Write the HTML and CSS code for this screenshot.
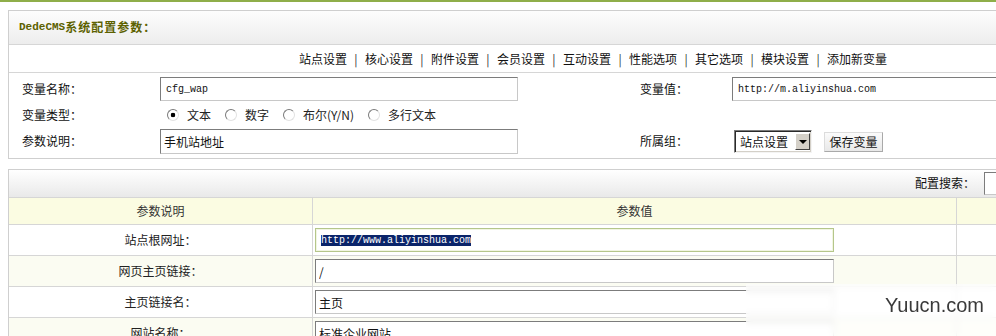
FILE: index.html
```html
<!DOCTYPE html>
<html lang="zh-CN">
<head>
<meta charset="utf-8">
<title>DedeCMS系统配置参数</title>
<link rel="stylesheet" href="styles.css">
</head>
<body>
<div class="topline"></div>
<div class="page">
  <div class="panel">
    <div class="title"><span class="latin">DedeCMS</span>系统配置参数：</div>
    <div class="nav">
      <a>站点设置</a><span class="sep">|</span><a>核心设置</a><span class="sep">|</span><a>附件设置</a><span class="sep">|</span><a>会员设置</a><span class="sep">|</span><a>互动设置</a><span class="sep">|</span><a>性能选项</a><span class="sep">|</span><a>其它选项</a><span class="sep">|</span><a>模块设置</a><span class="sep">|</span><a>添加新变量</a>
    </div>
    <div class="form">
      <div class="lbl">变量名称：</div>
      <div class="fld"><input class="txt mono w358" value="cfg_wap"></div>
      <div class="lbl">变量值：</div>
      <div class="fld"><input class="txt mono w358" value="http://m.aliyinshua.com"></div>

      <div class="lbl">变量类型：</div>
      <div class="fld radios">
        <label class="opt"><input type="radio" name="t" checked>文本</label>
        <label class="opt"><input type="radio" name="t">数字</label>
        <label class="opt"><input type="radio" name="t">布尔(Y/N)</label>
        <label class="opt"><input type="radio" name="t">多行文本</label>
      </div>
      <div></div>
      <div></div>

      <div class="lbl">参数说明：</div>
      <div class="fld"><input class="txt w358 tall" value="手机站地址"></div>
      <div class="lbl">所属组：</div>
      <div class="fld group">
        <span class="selwrap"><select class="sel"><option>站点设置</option></select><span class="arrow"></span></span>
        <button class="btn">保存变量</button>
      </div>
    </div>
  </div>

  <div class="panel list">
    <div class="toolbar"><span>配置搜索：</span><input class="txt search"></div>
    <table class="grid">
      <colgroup><col class="c1"><col class="c2"><col class="c3"></colgroup>
      <tr class="head"><td>参数说明</td><td>参数值</td><td></td></tr>
      <tr class="odd"><td>站点根网址：</td><td class="val"><div class="txt mono w519 focus"><span class="selected">http://www.aliyinshua.com</span></div></td><td></td></tr>
      <tr class="even"><td>网页主页链接：</td><td class="val"><input class="txt w519" value="/"></td><td></td></tr>
      <tr class="odd"><td>主页链接名：</td><td class="val"><input class="txt w519" value="主页"></td><td></td></tr>
      <tr class="even"><td>网站名称：</td><td class="val"><input class="txt w519" value="标准企业网站"></td><td></td></tr>
    </table>
  </div>
</div>
<div class="watermark">Yuucn.com</div>
</body>
</html>
```
FILE: styles.css
```css
html, body {
  margin: 0;
  padding: 0;
  overflow: hidden;
  background: #fff;
}
body {
  position: relative;
  width: 996px;
  height: 336px;
  font: 12px/1.2 "Noto Sans CJK SC", "Liberation Sans", sans-serif;
  color: #111;
}
.topline {
  height: 2px;
  background: #8fae4a;
}
.page {
  padding: 8px 0 0 8px;
  width: 1170px;
}
.panel {
  width: 1168px;
  border: 1px solid #cfcfcf;
  background: #fff;
}
.title {
  height: 33px;
  border-bottom: 1px solid #d6d6d6;
  background: linear-gradient(#fdfdfd, #ededed);
  display: flex;
  align-items: center;
  padding-left: 10px;
  font-weight: bold;
  letter-spacing: 1px;
  color: #5c6100;
}
.title .latin {
  font-family: "Liberation Mono", monospace;
  font-size: 11px;
  letter-spacing: 0;
}
.nav {
  height: 27px;
  line-height: 27px;
  border-bottom: 1px solid #d6d6d6;
  text-align: center;
  color: #111;
}
.nav .sep {
  display: inline-block;
  width: 18px;
  text-align: center;
  color: #333;
}
.form {
  display: grid;
  grid-template-columns: 138px 480px 92px 1fr;
  grid-template-rows: 32px 20px 33px;
  align-items: center;
  padding-left: 13px;
}
.fld {
  display: flex;
  align-items: center;
}
.txt {
  box-sizing: border-box;
  height: 24px;
  margin: 0;
  padding: 0 3px;
  border: 1px solid;
  border-color: #7c7c7c #c8c8c8 #c8c8c8 #7c7c7c;
  background: #fff;
  font: 12px "Noto Sans CJK SC", "Liberation Sans", sans-serif;
  color: #111;
  outline: none;
}
.mono {
  font-family: "Liberation Mono", monospace;
  font-size: 10px;
  padding-left: 5px;
}
.w358 { width: 358px; }
.tall { height: 25px; }
.w519 { width: 519px; }
.radios { padding-left: 7px; }
.opt {
  display: flex;
  align-items: center;
  margin-right: 14px;
  color: #222;
}
.opt input {
  appearance: none;
  -webkit-appearance: none;
  box-sizing: border-box;
  width: 12px;
  height: 12px;
  margin: 0 8px 0 0;
  border-radius: 50%;
  border: 1px solid;
  border-color: #7a7a7a #e2e2e2 #e2e2e2 #7a7a7a;
  background: #fff;
}
.opt input:checked {
  background: radial-gradient(circle, #000 0 2px, #fff 2.6px);
}
.group { gap: 12px; padding-left: 2px; }
.selwrap {
  position: relative;
  display: inline-block;
  width: 78px;
  height: 23px;
}
.sel {
  appearance: none;
  -webkit-appearance: none;
  box-sizing: border-box;
  width: 78px;
  height: 23px;
  margin: 0;
  padding: 0 0 0 5px;
  border: 1px solid;
  border-color: #7a7a7a #f4f4f4 #f4f4f4 #7a7a7a;
  box-shadow: inset 1px 1px 0 #2a2a2a, inset -1px -1px 0 #d4d0c8;
  border-radius: 0;
  background: #fff;
  font: 12px "Noto Sans CJK SC", sans-serif;
  color: #111;
}
.arrow {
  position: absolute;
  right: 2px;
  top: 3px;
  box-sizing: border-box;
  width: 15px;
  height: 17px;
  background: #d4d0c8;
  border: 1px solid;
  border-color: #fff #404040 #404040 #fff;
}
.arrow::after {
  content: "";
  position: absolute;
  left: 3px;
  top: 6px;
  border-left: 4px solid transparent;
  border-right: 4px solid transparent;
  border-top: 4px solid #000;
}
.btn {
  box-sizing: border-box;
  height: 20px;
  width: 59px;
  padding: 0;
  border: 1px solid;
  border-color: #dcdcdc #a9a9a9 #a9a9a9 #dcdcdc;
  background: linear-gradient(#fbfbfb, #e8e8e8);
  font: 12px "Noto Sans CJK SC", sans-serif;
  color: #111;
}
.list { margin-top: 10px; }
.toolbar {
  height: 27px;
  border-bottom: 1px solid #d6d6d6;
  background: linear-gradient(#ffffff, #e9e9e9);
  display: flex;
  align-items: center;
  justify-content: flex-end;
  padding-right: 13px;
}
.search {
  width: 180px;
  height: 23px;
  margin-left: 9px;
}
.grid {
  width: 1168px;
  table-layout: fixed;
  border-collapse: separate;
  border-spacing: 0;
}
.c1 { width: 304px; }
.c2 { width: 644px; }
.c3 { width: 220px; }
.grid td {
  box-sizing: border-box;
  height: 31px;
  padding: 0;
  border-bottom: 1px solid #d6d6d6;
  border-right: 1px solid #d6d6d6;
  text-align: center;
  vertical-align: middle;
  color: #222;
}
.grid td:last-child { border-right: 0; }
.grid .head td {
  height: 27px;
  background: #fbfce2;
  color: #333;
}
.grid .val { text-align: left; padding-left: 2px; }
.grid .val .txt { display: block; }
.even td { background: #fbfcf2; }
.focus {
  display: flex !important;
  align-items: center;
  border: 1px solid #b5c68a;
  box-shadow: inset 0 0 0 1px #f1f5e2;
}
.selected {
  background: #0a246a;
  color: #fff;
}
.watermark {
  position: absolute;
  left: 746px;
  top: 284px;
  width: 250px;
  height: 52px;
  box-sizing: border-box;
  padding: 10px 12px 0 0;
  text-align: right;
  font: 20px "Liberation Sans", Arial, sans-serif;
  color: #3a3a3a;
  background: rgba(255, 255, 255, 0.62);
  -webkit-backdrop-filter: blur(3px);
  backdrop-filter: blur(3px);
}
```
